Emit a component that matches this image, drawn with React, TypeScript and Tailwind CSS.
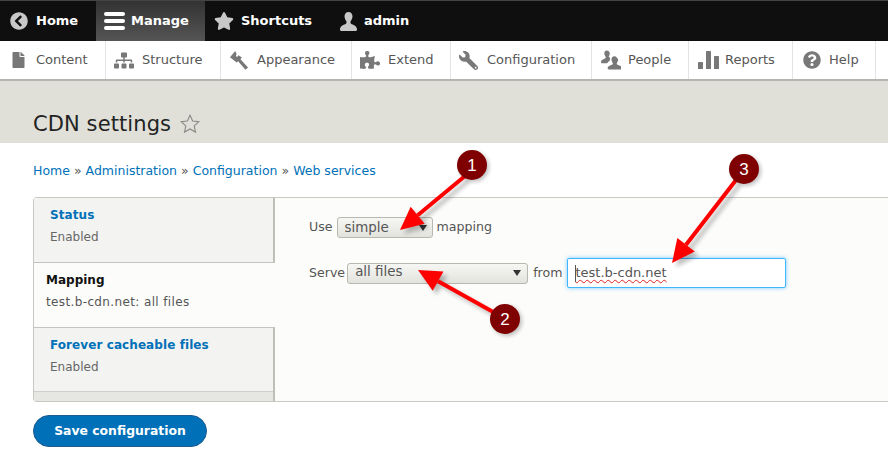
import { FaChevronCircleLeft, FaStar, FaSitemap, FaPuzzlePiece, FaWrench, FaQuestionCircle, FaFile } from "react-icons/fa";
import type { ReactNode } from "react";

const font = "font-['DejaVu_Sans',sans-serif]";

function UserIcon({ className }: { className?: string }) {
  return (
    <svg viewBox="0 0 20 20" className={className} fill="currentColor">
      <path d="M10 0c-2.6 0-4.2 2-4.2 4.6 0 2 .8 3.7 1.8 4.9.5.7.4 2.2-.3 2.9C5.600 13.700 1 14.300 1 18.500c0 .8.500 1.500 1.300 1.500h15.400c.8 0 1.300-.7 1.300-1.500 0-4.200-4.600-4.800-6.300-6.100-.7-.7-.8-2.200-.3-2.900 1-1.200 1.800-2.900 1.800-4.900C14.200 2 12.600 0 10 0z" />
    </svg>
  );
}

function PeopleIcon({ className }: { className?: string }) {
  return (
    <svg viewBox="0 0 21 20" className={className} fill="currentColor">
      <path d="M6 0C4.300 0 3.500 1.300 3.500 3c0 1.300.6 2.600 1.300 3.500.3.500.2 1.300-.2 1.700C3.500 9 0 9.500 0 12.500c0 .5.300.8.800.8h5.700c1-1.500 2.300-2.300 3-3-.3-1-.2-2 .2-2.600l-1.700-.9c.7-.9 1.200-2.300 1.200-3.800C9.200 1.300 7.700 0 6 0z" />
      <path d="M14 6c-1.900 0-3 1.500-3 3.400 0 1.300.6 2.500 1.200 3.400.4.600.3 1.500-.2 2-1.300.9-5 1.300-5 3.700 0 .9.400 1.500 1.200 1.500h12.600c.8 0 1.200-.6 1.200-1.500 0-2.400-3.700-2.800-5-3.700-.5-.5-.6-1.400-.2-2 .6-.9 1.200-2.100 1.200-3.400C17 7.500 15.900 6 14 6z" />
    </svg>
  );
}

function BrushIcon({ className }: { className?: string }) {
  return (
    <svg viewBox="0 0 20 20" className={className} fill="currentColor">
      <path d="M5.500 0 0 6.500l7 5.500 1.500-1.300 7.800 9 2.700-2.400-8-8.700 1.500-1.700-3.500-2.400-1.600 1.700-1.300-1L7 3.500 5.500 0z" />
    </svg>
  );
}

function ReportsIcon({ className }: { className?: string }) {
  return (
    <svg viewBox="0 0 21 18" className={className} fill="currentColor">
      <rect x="0" y="11" width="5" height="7" rx="0.5" />
      <rect x="8" y="0" width="5" height="18" rx="0.5" />
      <rect x="16" y="5" width="5" height="13" rx="0.5" />
    </svg>
  );
}

function TopItem({ icon, label, active, width }: { icon: ReactNode; label: string; active?: boolean; width: string }) {
  return (
    <div className={`flex h-full items-center pl-[9px] text-[13px] font-bold text-white ${width} ${active ? "bg-gradient-to-b from-[#333333] to-[#555555]" : ""}`}>
      {icon}
      <span className="whitespace-nowrap">{label}</span>
    </div>
  );
}

function NavItem({ icon, label, width }: { icon: ReactNode; label: string; width: string }) {
  return (
    <div className={`flex h-full shrink-0 items-center border-r border-[#e3e3e3] text-[13px] text-[#565656] ${width}`}>
      {icon}
      <span className="whitespace-nowrap">{label}</span>
    </div>
  );
}

function Tab({ title, sub, active, height = "h-[64px]" }: { title: string; sub: string; active?: boolean; height?: string }) {
  if (active) {
    return (
      <div className="relative z-10 -mr-[2px] h-[66px] border-y border-[#c4c4bf] bg-[#fcfcfa] pt-[8px] pl-[12px] text-[12px]">
        <div className="leading-[18px] font-bold text-[#111]">{title}</div>
        <div className="mt-[4px] leading-[18px] tracking-[0.37px] text-[#555]">{sub}</div>
      </div>
    );
  }
  return (
    <div className={`${height} bg-[#f3f3f1] pt-[8px] pl-[16px] text-[12px]`}>
      <div className="leading-[18px] font-bold tracking-[0.08px] text-[#0071b8]">{title}</div>
      <div className="mt-[4px] leading-[18px] text-[#666]">{sub}</div>
    </div>
  );
}

function Arrow({ x1, y1, x2, y2, shaft }: { x1: number; y1: number; x2: number; y2: number; shaft: string }) {
  const dx = x2 - x1;
  const dy = y2 - y1;
  const len = Math.hypot(dx, dy);
  const ux = dx / len;
  const uy = dy / len;
  const bx = x2 - ux * 23;
  const by = y2 - uy * 23;
  const head = `${x2},${y2} ${bx - uy * 11},${by + ux * 11} ${bx + uy * 11},${by - ux * 11}`;
  return (
    <g>
      <g opacity="0.25" transform="translate(4 4)" filter="url(#soft)">
        <line x1={x1} y1={y1} x2={bx} y2={by} stroke="#000" strokeWidth={shaft} />
        <polygon points={head} fill="#000" />
      </g>
      <line x1={x1} y1={y1} x2={bx} y2={by} stroke="#ff0000" strokeWidth={shaft} />
      <polygon points={head} fill="#ff0000" />
    </g>
  );
}

function Badge({ cx, cy, n }: { cx: number; cy: number; n: string }) {
  return (
    <g>
      <circle cx={cx + 2} cy={cy + 2} r="15" fill="#000" opacity="0.25" filter="url(#soft)" />
      <circle cx={cx} cy={cy} r="15" fill="#7f0000" />
      <text x={cx} y={cy + 6} textAnchor="middle" fontSize="17" fill="#fff" fontFamily="'Liberation Sans', sans-serif">
        {n}
      </text>
    </g>
  );
}

export default function App() {
  return (
    <div className={`relative h-[461px] w-[888px] overflow-hidden bg-white ${font}`}>
      <div className="flex h-[41px] items-stretch border-t border-[#444] bg-[#0f0f0f]">
        <TopItem width="w-[96px]" label="Home" icon={<FaChevronCircleLeft className="mr-[8px] ml-[1px] h-[18px] w-[18px] text-[#c8c8c8]" />} />
        <TopItem
          width="w-[109px]"
          active
          label="Manage"
          icon={
            <span className="mr-[6px] ml-[-1px] flex w-[21px] flex-col gap-[3px]">
              <span className="h-[4px] rounded-[2px] bg-white" />
              <span className="h-[4px] rounded-[2px] bg-white" />
              <span className="h-[4px] rounded-[2px] bg-white" />
            </span>
          }
        />
        <TopItem width="w-[124px]" label="Shortcuts" icon={<FaStar className="mr-[7px] h-[20px] w-[20px] text-[#c8c8c8]" />} />
        <TopItem width="w-[100px]" label="admin" icon={<UserIcon className="mr-[6px] ml-[1px] h-[19px] w-[19px] text-[#c8c8c8]" />} />
      </div>

      <div className="flex h-[40px] border-b-[2px] border-[#b5b5b0] bg-white">
        <NavItem width="w-[106px]" label="Content" icon={<FaFile className="mr-[11px] ml-[12px] h-[16px] w-[13px] text-[#787878]" />} />
        <NavItem width="w-[115px]" label="Structure" icon={<FaSitemap className="mr-[8px] ml-[8px] h-[19px] w-[20px] text-[#787878]" />} />
        <NavItem width="w-[131px]" label="Appearance" icon={<BrushIcon className="mr-[8px] ml-[9px] h-[19px] w-[19px] text-[#787878]" />} />
        <NavItem width="w-[99px]" label="Extend" icon={<FaPuzzlePiece className="mr-[8px] ml-[8px] h-[18px] w-[20px] text-[#787878]" />} />
        <NavItem width="w-[141px]" label="Configuration" icon={<FaWrench className="mr-[9px] ml-[8px] h-[19px] w-[19px] -scale-x-100 text-[#787878]" />} />
        <NavItem width="w-[97px]" label="People" icon={<PeopleIcon className="mr-[7px] ml-[9px] h-[20px] w-[20px] text-[#787878]" />} />
        <NavItem width="w-[104px]" label="Reports" icon={<ReportsIcon className="mr-[6px] ml-[9px] h-[18px] w-[21px] text-[#787878]" />} />
        <NavItem width="w-[83px]" label="Help" icon={<FaQuestionCircle className="mr-[8px] ml-[10px] h-[18px] w-[18px] text-[#787878]" />} />
      </div>

      <div className="flex h-[62px] items-end bg-[#e0e0d8] pb-[6px] pl-[33px]">
        <h1 className="text-[21px] leading-[26px] font-normal tracking-[0.1px] text-[#232323]">CDN settings</h1>
        <svg viewBox="0 0 24 24" className="mb-[2px] ml-[8px] h-[22px] w-[22px]" fill="none" stroke="#8a8a84" strokeWidth="1.2">
          <path d="m12 2.500 2.900 6.200 6.700.8-5 4.600 1.400 6.700L12 17.400l-6 3.400 1.400-6.700-5-4.600 6.700-.8z" />
        </svg>
      </div>

      <div className="flex h-[54px] items-center pt-[2px] pl-[33px] text-[12.5px] whitespace-nowrap text-[#555]">
        <span className="text-[#0071b8]">Home</span>
        <span className="mx-[4px]">»</span>
        <span className="text-[#0071b8]">Administration</span>
        <span className="mx-[4px]">»</span>
        <span className="text-[#0071b8]">Configuration</span>
        <span className="mx-[4px]">»</span>
        <span className="text-[#0071b8]">Web services</span>
      </div>

      <div className="ml-[33px] flex h-[205px] rounded-l-[4px] border-y border-l border-[#c8c8c4] bg-[#fcfcfa]">
        <div className="flex w-[241px] shrink-0 flex-col border-r-[2px] border-[#bfbfba] bg-[#e6e6e2]">
          <Tab title="Status" sub="Enabled" />
          <Tab title="Mapping" sub="test.b-cdn.net: all files" active />
          <Tab title="Forever cacheable files" sub="Enabled" height="h-[63px]" />
          <div className="h-px bg-[#d0d0cb]" />
        </div>
        <div className="flex flex-col pt-[19px] pl-[34px] text-[12.6px] text-[#555]">
          <div className="flex h-[21px] items-center">
            <span>Use</span>
            <div className="mx-[4px] flex h-[21px] w-[96px] items-center justify-between rounded-[3px] border border-[#b8b8b0] bg-gradient-to-b from-[#f6f6f3] to-[#e3e3de] pt-[1px] pr-[5px] pl-[7px] text-[13.4px] text-[#555]">
              simple
              <span className="h-0 w-0 border-x-[4px] border-t-[6px] border-x-transparent border-t-[#333]" />
            </div>
            <span>mapping</span>
          </div>
          <div className="mt-[20px] flex h-[30px] items-center">
            <span>Serve</span>
            <div className="mr-[5px] ml-[2px] flex h-[21px] w-[181px] items-center justify-between rounded-[3px] border border-[#b8b8b0] bg-gradient-to-b from-[#f6f6f3] to-[#e3e3de] pr-[6px] pb-[1px] pl-[7px] text-[13.4px] text-[#555]">
              all files
              <span className="h-0 w-0 border-x-[4px] border-t-[6px] border-x-transparent border-t-[#333]" />
            </div>
            <span>from</span>
            <div className="relative ml-[5px] flex h-[30px] w-[219px] items-center rounded-[2px] border border-[#40b6ff] bg-white pl-[7px] text-[13px] text-[#555] shadow-[0_0_4px_#7cc9ff]">
              <span className="absolute top-[6px] left-[7px] h-[17px] w-px bg-[#555]" />
              <span className="underline decoration-wavy decoration-[#e02020] decoration-1 underline-offset-2">test.b-cdn.net</span>
            </div>
          </div>
        </div>
      </div>

      <div className="mt-[13px] ml-[33px] flex h-[32px] w-[174px] items-center justify-center rounded-[16px] border border-[#1e5c90] bg-[#0071b8] text-[12.4px] font-bold text-white">
        Save configuration
      </div>

      {/* annotation arrows sit over the page */}
      <svg className="pointer-events-none absolute top-0 left-0" width="888" height="461">
        <defs>
          <filter id="soft">
            <feGaussianBlur stdDeviation="2" />
          </filter>
        </defs>
        <Arrow x1={465} y1={176} x2={400} y2={230} shaft="4" />
        <Arrow x1={495} y1={313} x2={418} y2={270} shaft="4" />
        <Arrow x1={736} y1={180} x2={672} y2={263} shaft="4" />
        <Badge cx={472} cy={165} n="1" />
        <Badge cx={505} cy={319} n="2" />
        <Badge cx={744} cy={169} n="3" />
      </svg>
    </div>
  );
}
